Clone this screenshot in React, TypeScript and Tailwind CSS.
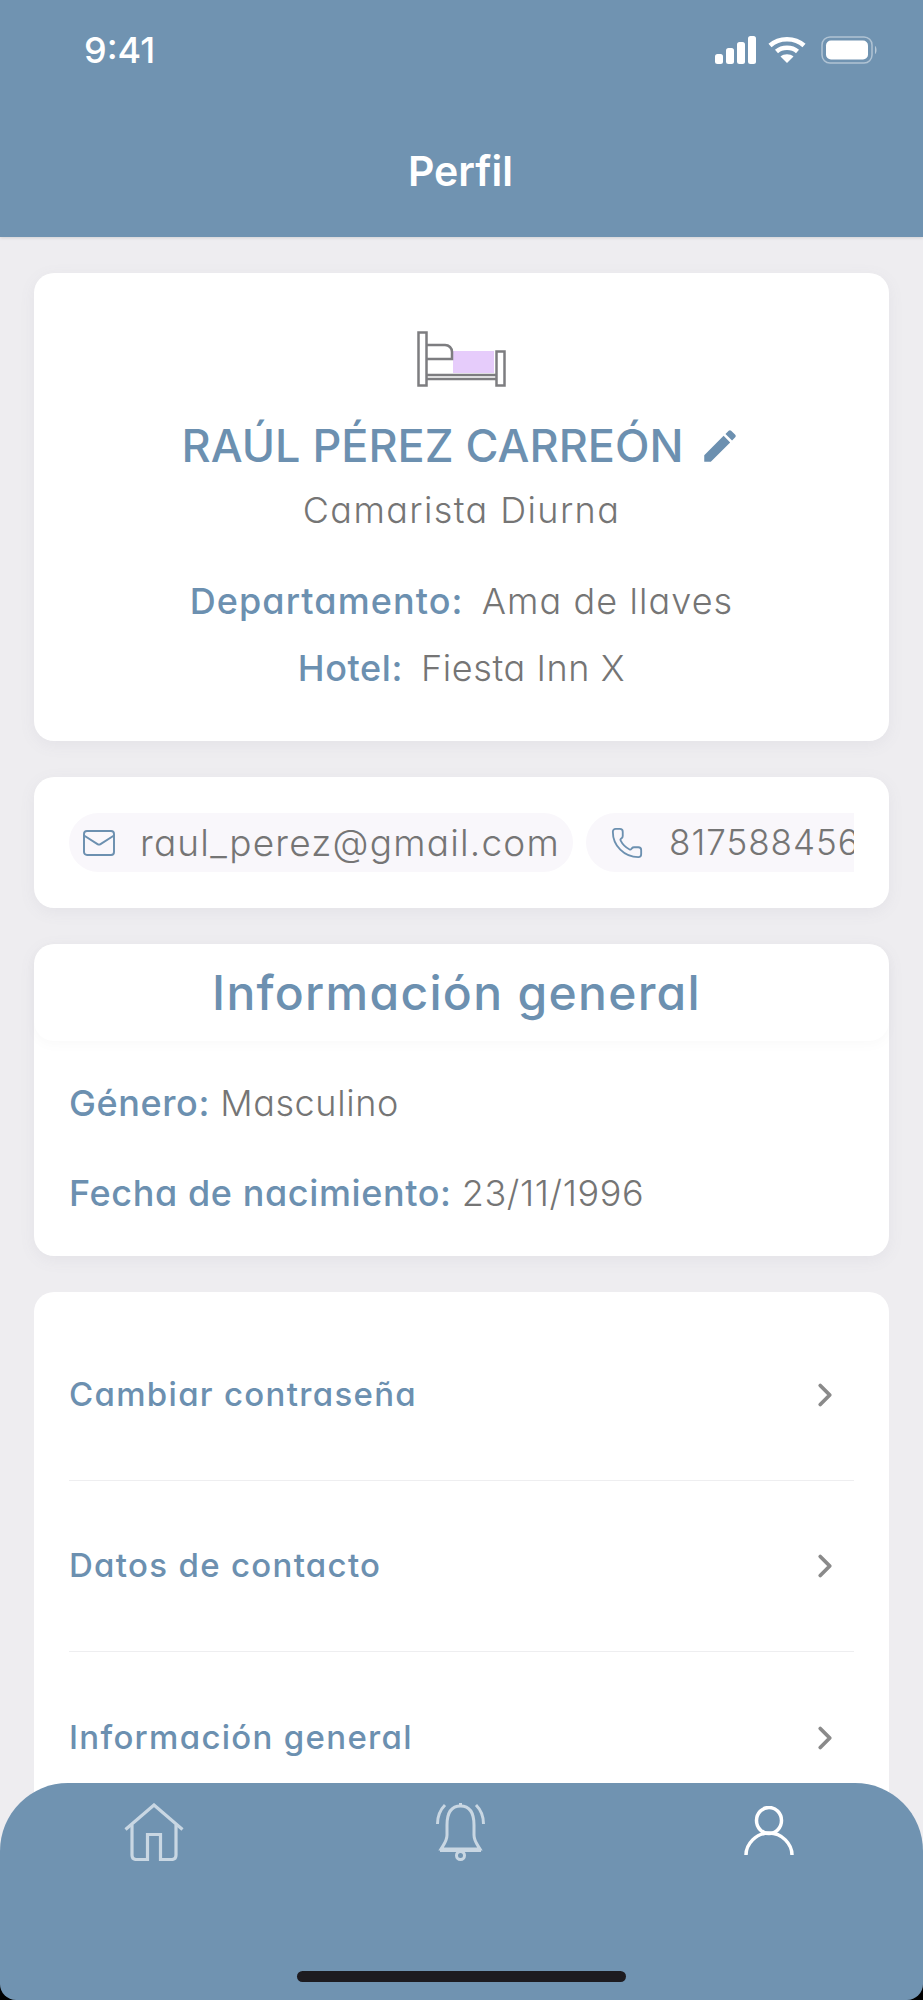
import { ChevronRight, Mail, Phone } from 'lucide-react'

function StatusIcons() {
  return (
    <div className="flex items-center">
      <svg width="41" height="28" viewBox="0 0 41 28" fill="white">
        <rect x="0" y="18" width="8" height="10" rx="2.5" />
        <rect x="11" y="12" width="8" height="16" rx="2.5" />
        <rect x="22" y="6" width="8" height="22" rx="2.5" />
        <rect x="33" y="0" width="8" height="28" rx="2.5" />
      </svg>
      <svg className="ml-[12px]" width="38" height="28" viewBox="0 0 38 28" fill="none" stroke="white" strokeWidth="4.5">
        <path d="M2 9.5C11 1 27 1 36 9.5" />
        <path d="M8.5 15.5C14 10.5 24 10.5 29.5 15.5" />
        <path d="M19 27L12.5 20.5C16 17.5 22 17.5 25.5 20.5Z" fill="white" stroke="none" />
      </svg>
      <svg className="ml-[15px]" width="57" height="28" viewBox="0 0 57 28" fill="none">
        <rect x="1" y="1" width="50" height="26" rx="8" stroke="white" strokeOpacity="0.45" strokeWidth="1.5" />
        <rect x="5" y="4.5" width="42" height="19" rx="5" fill="white" />
        <path d="M54 10C56 11 56 17 54 18Z" fill="white" fillOpacity="0.5" />
      </svg>
    </div>
  )
}

function BedIcon() {
  return (
    <svg width="90" height="56" viewBox="0 0 90 56" fill="none" stroke="#7d7d80" strokeWidth="2.5">
      <rect x="36" y="20" width="41" height="22" fill="#e6ccfb" stroke="none" />
      <rect x="1.5" y="1.5" width="8" height="53" />
      <rect x="79.5" y="20.5" width="8" height="34" />
      <path d="M9.5 14H28C32 14 35 17 35 21V28H9.5" />
      <path d="M9.5 48H79.5M9.5 44H79.5" />
    </svg>
  )
}

function MenuRow({ label, border = true }: { label: string; border?: boolean }) {
  return (
    <div className={`flex h-[171px] items-center justify-between pr-[10px] ${border ? 'border-b border-[#eeeef0]' : ''}`}>
      <span className="text-[33px] font-[450] tracking-[1.3px] text-[#6c90b0]">{label}</span>
      <ChevronRight className="h-[38px] w-[38px] text-[#8a8a8a]" strokeWidth={2.4} />
    </div>
  )
}

export default function App() {
  return (
    <div
      className="relative h-[2000px] w-[923px] overflow-hidden bg-black [font-feature-settings:'cv11']"
      style={{ fontFamily: 'Inter, "Noto Sans", sans-serif' }}
    >
      <div className="h-[1980px] overflow-hidden bg-[#eeedf0]">
        <header className="h-[237px] bg-[#7093b1] shadow-[0_1px_3px_rgba(0,0,0,0.12)]">
          <div className="flex items-center justify-between pl-[84px] pr-[45px] pt-[30px]">
            <span className="text-[36px] font-medium leading-[40px] text-white">9:41</span>
            <StatusIcons />
          </div>
          <h1 className="mt-[75px] pr-[2px] text-center text-[41px] font-semibold leading-[52px] text-white">Perfil</h1>
        </header>

        <main className="flex flex-col gap-[36px] px-[34px] pt-[36px]">
          <section className="flex h-[468px] flex-col items-center rounded-[20px] bg-white pt-[58px] shadow-[0_4px_16px_rgba(120,120,140,0.08)]">
            <BedIcon />
            <div className="mt-[27px] flex items-center gap-[16px]">
              <h2 className="text-[45px] font-medium leading-[64px] text-[#6c90b0]">RAÚL PÉREZ CARREÓN</h2>
              <svg width="42" height="42" viewBox="0 0 24 24" fill="#6c90b0">
                <path d="M3 17.25V21h3.75L17.81 9.94l-3.75-3.75L3 17.25zM20.71 7.04a1 1 0 0 0 0-1.41l-2.34-2.34a1 1 0 0 0-1.41 0l-1.83 1.83 3.75 3.75 1.83-1.83z" />
              </svg>
            </div>
            <p className="mt-[7px] text-[36px] font-light leading-[50px] tracking-[1.4px] text-[#757575]">Camarista Diurna</p>
            <p className="mt-[41px] text-[36px] leading-[50px] tracking-[1.1px]">
              <span className="font-[450] text-[#6c90b0]">Departamento:</span>
              <span className="ml-[18px] font-light text-[#757575]">Ama de llaves</span>
            </p>
            <p className="mt-[17px] text-[36px] leading-[50px] tracking-[0.6px]">
              <span className="font-[450] text-[#6c90b0]">Hotel:</span>
              <span className="ml-[18px] font-light text-[#757575]">Fiesta Inn X</span>
            </p>
          </section>

          <section className="h-[131px] rounded-[20px] bg-white px-[35px] pt-[36px] shadow-[0_4px_16px_rgba(120,120,140,0.08)]">
            <div className="flex gap-[13px] overflow-hidden">
              <div className="flex h-[59px] w-[504px] shrink-0 items-center gap-[23px] rounded-full bg-[#f9f7fb] pl-[12px]">
                <Mail className="h-[36px] w-[36px] text-[#6c90b0]" strokeWidth={1.3} />
                <span className="text-[37px] font-light tracking-[1.2px] text-[#757575]">raul_perez@gmail.com</span>
              </div>
              <div className="flex h-[59px] shrink-0 items-center gap-[25px] rounded-full bg-[#f9f7fb] pl-[24px] pr-[14px]">
                <Phone className="h-[34px] w-[34px] text-[#6c90b0]" strokeWidth={1.3} />
                <span className="text-[35px] font-light tracking-[1px] text-[#757575]">8175884562</span>
              </div>
            </div>
          </section>

          <section className="h-[312px] rounded-[20px] bg-white shadow-[0_4px_16px_rgba(120,120,140,0.08)]">
            <div className="flex h-[97px] items-center justify-center rounded-[20px] pr-[10px] shadow-[0_4px_10px_rgba(120,120,140,0.04)]">
              <h2 className="text-[48px] font-medium tracking-[1.3px] text-[#6c90b0]">Información general</h2>
            </div>
            <p className="mt-[37px] px-[35px] text-[36px] leading-[50px] tracking-[0.6px]">
              <span className="font-[450] text-[#6c90b0]">Género: </span>
              <span className="font-light text-[#757575]">Masculino</span>
            </p>
            <p className="mt-[40px] px-[35px] text-[36px] leading-[50px] tracking-[0.6px]">
              <span className="font-[450] text-[#6c90b0]">Fecha de nacimiento: </span>
              <span className="font-light text-[#757575]">23/11/1996</span>
            </p>
          </section>

          <section className="rounded-[20px] bg-white px-[35px] pb-[60px] pt-[18px]">
            <MenuRow label="Cambiar contraseña" />
            <MenuRow label="Datos de contacto" />
            <MenuRow label="Información general" border={false} />
          </section>
        </main>
      </div>

      <nav className="absolute inset-x-0 bottom-0 h-[217px] rounded-t-[68px] rounded-b-[16px] bg-[#7093b1]">
        <div className="flex items-start pl-[124px] pt-[20px]">
          <svg width="60" height="58" viewBox="0 0 60 58" fill="none" stroke="#c9d7e3" strokeWidth="3.2">
            <path d="M1.5 26.5L30 2L58.5 26.5" />
            <path d="M8 22V52Q8 56.5 12.5 56.5H23.5V31.5H36.5V56.5H47.5Q52 56.5 52 52V22" />
          </svg>
          <svg className="ml-[252px]" width="50" height="58" viewBox="0 0 50 58" fill="none" stroke="#c9d7e3" strokeWidth="3">
            <path d="M24.5 0V3" />
            <path d="M24.5 3C14 3 11 12 11 22V32C11 38 8 41 5 46H44C41 41 38 38 38 32V22C38 12 35 3 24.5 3Z" />
            <path d="M4 47H45" strokeWidth="4" />
            <circle cx="24.5" cy="52.5" r="4" />
            <path d="M9 2C3 8 1.5 14 1.5 21M40 2C46 8 47.5 14 47.5 21" />
          </svg>
          <svg className="ml-[258px] mt-[3px]" width="50" height="50" viewBox="0 0 50 50" fill="none" stroke="white" strokeWidth="3.5">
            <ellipse cx="25" cy="14.5" rx="12.5" ry="13" />
            <path d="M2 49C2 38 12 27 25 27C38 27 48 38 48 49" />
          </svg>
        </div>
        <div className="absolute bottom-[18px] left-[297px] h-[11px] w-[329px] rounded-full bg-[#1d1b20]" />
      </nav>
    </div>
  )
}
